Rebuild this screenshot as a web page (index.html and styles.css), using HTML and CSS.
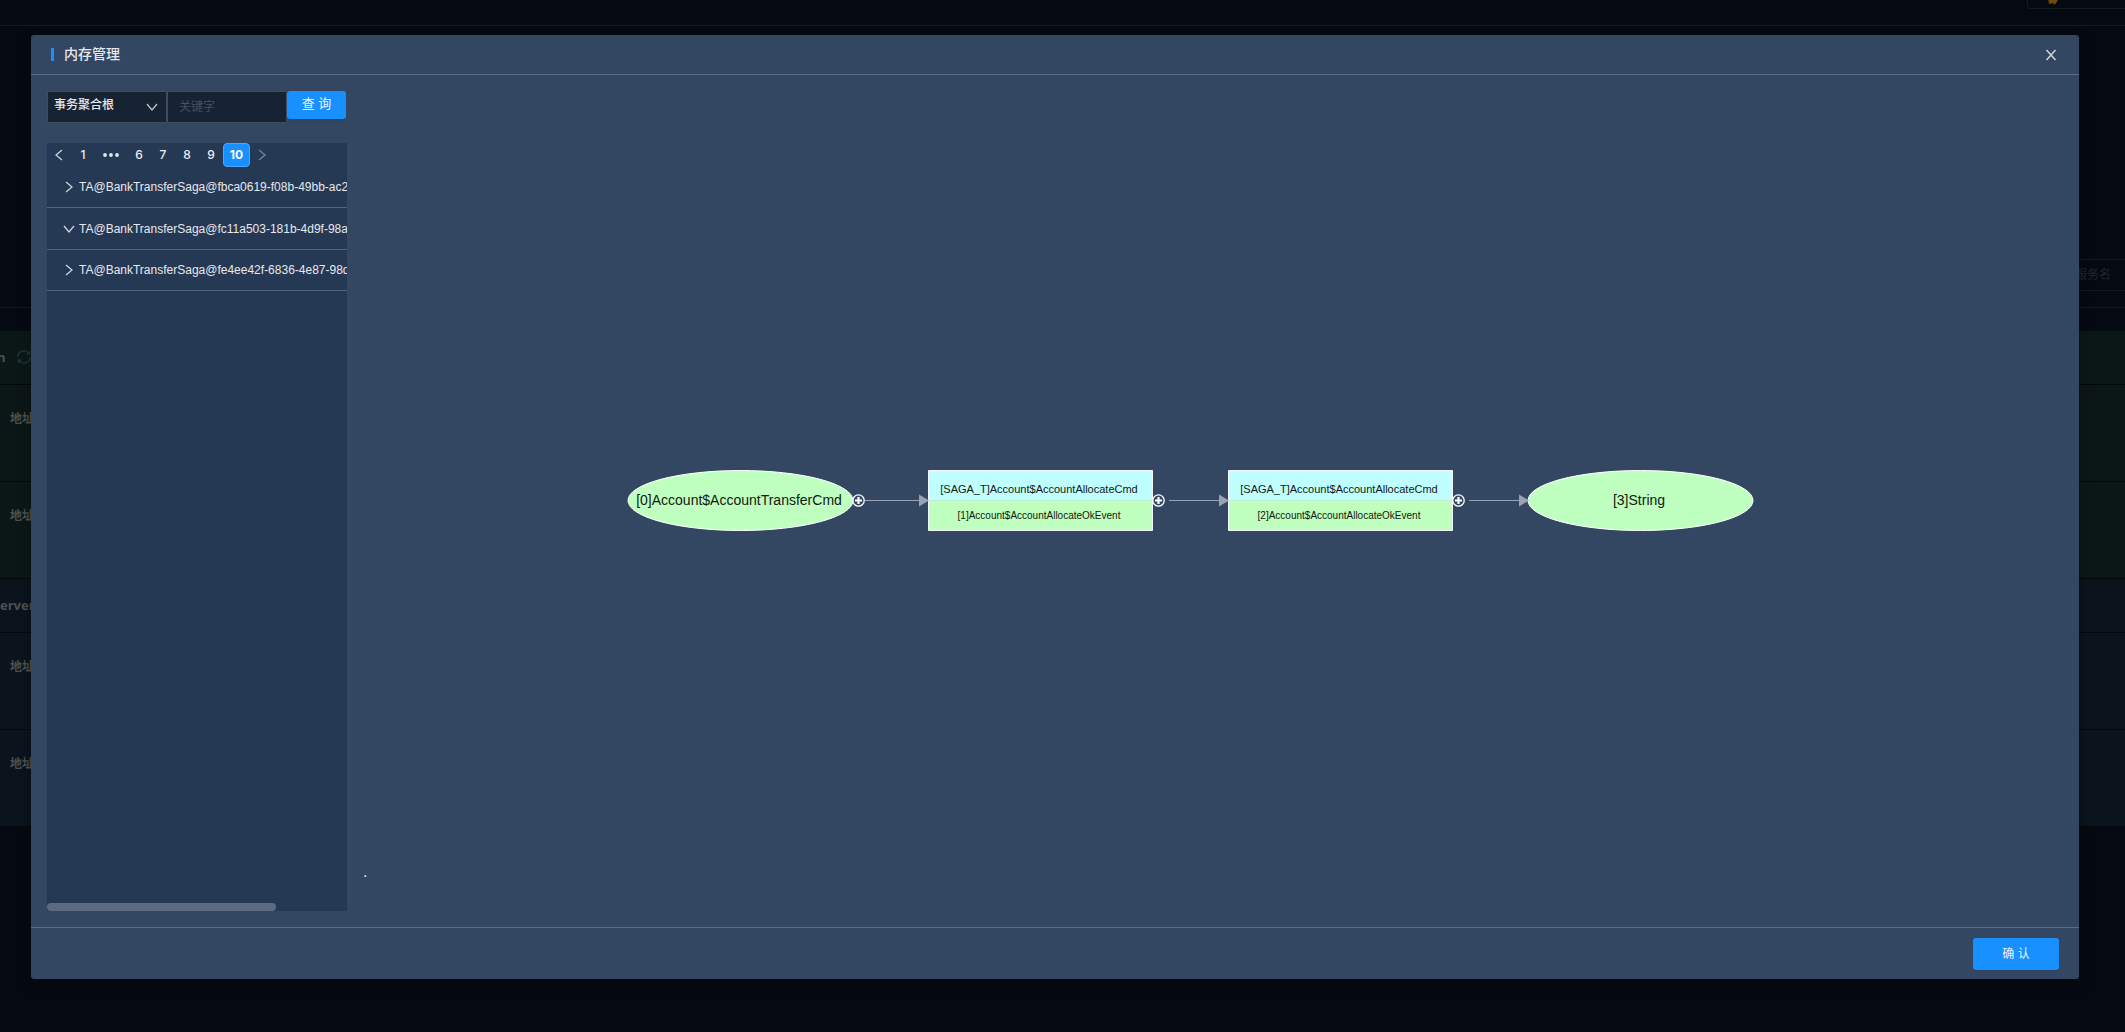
FILE: index.html
```
<!DOCTYPE html>
<html lang="zh-CN">
<head>
<meta charset="utf-8">
<title>内存管理</title>
<link rel="stylesheet" href="styles.css">
</head>
<body>
<div class="page">
  <header class="topbar">
    <div class="notice"><svg width="14" height="14" viewBox="0 0 14 14"><path d="M2 6l3-3 4-1 3 5-1 3-1 1-2 2-1-2-4 1z" fill="#6b4a0c"/></svg></div>
  </header>
  <div class="filters"><div class="service-name">服务名</div></div>
  <main class="services">
    <section class="group group-green">
      <div class="group-head">n
        <svg class="sync" width="16" height="16" viewBox="0 0 16 16" fill="none" stroke="#1c3545" stroke-width="1.3"><path d="M2 8a6 6 0 0 1 11-3.400M14 8a6 6 0 0 1-11 3.400"/><path d="M13.500 2v3h-3M2.500 14v-3h3"/></svg>
      </div>
      <div class="address">地址</div>
      <div class="address">地址</div>
    </section>
    <section class="group group-blue">
      <div class="group-head">erver</div>
      <div class="address">地址</div>
      <div class="address">地址</div>
    </section>
  </main>
</div>

<div class="modal" role="dialog" aria-labelledby="modal-title">
  <div class="modal-head">
    <h1 class="modal-title" id="modal-title">内存管理</h1>
    <button class="close" type="button" aria-label="关闭"><svg width="12" height="12" viewBox="0 0 12 12" fill="none" stroke="#d6dae0" stroke-width="1.4"><path d="M1.500 1l9 10M10.500 1l-9 10"/></svg></button>
  </div>
  <div class="modal-body">
    <aside class="side">
      <form class="search">
        <div class="select-wrap">
          <select class="kind" aria-label="类型"><option>事务聚合根</option></select>
          <svg class="select-arrow" width="12" height="12" viewBox="0 0 12 12" fill="none" stroke="#c3c8ce" stroke-width="1.2"><path d="M1 3l5 6 5-6"/></svg>
        </div>
        <input class="keyword" type="text" placeholder="关键字" aria-label="关键字">
        <button class="primary query" type="button">查 询</button>
      </form>
      <div class="list">
        <nav class="pager" aria-label="分页">
          <button class="page-step" type="button" aria-label="上一页"><svg width="10" height="12" viewBox="0 0 10 12" fill="none" stroke="#d4d7dd" stroke-width="1.2"><path d="M8 1L2 6l6 5"/></svg></button>
          <button class="page-no" type="button">1</button>
          <button class="page-gap" type="button" aria-label="更多"><svg width="18" height="4" viewBox="0 0 18 4" fill="#e3e6ea"><circle cx="3" cy="2" r="1.900"/><circle cx="9" cy="2" r="1.900"/><circle cx="15" cy="2" r="1.900"/></svg></button>
          <button class="page-no" type="button">6</button>
          <button class="page-no" type="button">7</button>
          <button class="page-no" type="button">8</button>
          <button class="page-no" type="button">9</button>
          <button class="page-no current" type="button" aria-current="page">10</button>
          <button class="page-step" type="button" aria-label="下一页" disabled><svg width="10" height="12" viewBox="0 0 10 12" fill="none" stroke="#7d8898" stroke-width="1.200"><path d="M2 1l6 5-6 5"/></svg></button>
        </nav>
        <ul class="rows">
          <li class="row"><svg class="caret" width="12" height="12" viewBox="0 0 12 12" fill="none" stroke="#d4d7dd" stroke-width="1.200"><path d="M3 1l6 5-6 5"/></svg>TA@BankTransferSaga@fbca0619-f08b-49bb-ac2e</li>
          <li class="row"><svg class="caret" width="12" height="12" viewBox="0 0 12 12" fill="none" stroke="#d4d7dd" stroke-width="1.200"><path d="M1 3l5 6 5-6"/></svg>TA@BankTransferSaga@fc11a503-181b-4d9f-98a3</li>
          <li class="row"><svg class="caret" width="12" height="12" viewBox="0 0 12 12" fill="none" stroke="#d4d7dd" stroke-width="1.200"><path d="M3 1l6 5-6 5"/></svg>TA@BankTransferSaga@fe4ee42f-6836-4e87-98dc</li>
        </ul>
        <div class="scroll-thumb"></div>
      </div>
    </aside>
    <div class="stage">
      <svg class="graph" role="img" aria-label="事务流程">
        <defs>
          <g id="plus"><circle r="5.700" fill="none" stroke="#fff" stroke-width="1.300"/><path d="M-3.500 0h7M0-3.500v7" stroke="#fff" stroke-width="2.200"/></g>
          <g id="arrow"><path d="M0 0l-10-6v12z" fill="#9aa3b3"/></g>
        </defs>
        <path class="edge" d="M502 409.500h54M806 409.500h50M1106 409.500h50"/>
        <ellipse class="green" cx="377.500" cy="409.500" rx="112.500" ry="30"/>
        <text class="label" x="376" y="414">[0]Account$AccountTransferCmd</text>
        <rect class="cyan" x="565.500" y="379.500" width="224" height="30"/>
        <rect class="green" x="565.500" y="409.500" width="224" height="30"/>
        <path class="frame" d="M565.500 439.500v-60h224v60z"/>
        <path class="split" d="M566 409.500h223"/>
        <text class="label cmd" x="676" y="402">[SAGA_T]Account$AccountAllocateCmd</text>
        <text class="label event" x="676" y="428">[1]Account$AccountAllocateOkEvent</text>
        <rect class="cyan" x="865.500" y="379.500" width="224" height="30"/>
        <rect class="green" x="865.500" y="409.500" width="224" height="30"/>
        <path class="frame" d="M865.500 439.500v-60h224v60z"/>
        <path class="split" d="M866 409.500h223"/>
        <text class="label cmd" x="976" y="402">[SAGA_T]Account$AccountAllocateCmd</text>
        <text class="label event" x="976" y="428">[2]Account$AccountAllocateOkEvent</text>
        <ellipse class="green" cx="1277.500" cy="409.500" rx="112.500" ry="30"/>
        <text class="label" x="1276" y="414">[3]String</text>
        <use href="#arrow" x="566" y="409.500"/><use href="#arrow" x="866" y="409.500"/><use href="#arrow" x="1166" y="409.500"/>
        <use href="#plus" x="495.500" y="409.500"/><use href="#plus" x="795.500" y="409.500"/><use href="#plus" x="1095.500" y="409.500"/>
      </svg>
      <p class="caption">.</p>
    </div>
  </div>
  <div class="modal-foot"><button class="primary confirm" type="button">确 认</button></div>
</div>
</body>
</html>
```
FILE: styles.css
```
* { box-sizing: border-box; }
html, body { height: 100%; }
body {
  margin: 0;
  position: relative;
  overflow: hidden;
  background: #050a12;
  color: #e6e8ec;
  font: 12px/18px "Liberation Sans", "Noto Sans CJK SC", sans-serif;
}
button, input, select { font: inherit; color: inherit; margin: 0; }
button { border: 0; padding: 0; background: none; cursor: pointer; }
svg { display: block; flex: none; }

/* dimmed page behind the dialog */
.page { min-height: 100%; color: #4c5150; }
.topbar { height: 26px; border-bottom: 1px solid #141a1f; display: flex; justify-content: flex-end; }
.notice {
  width: 98px; height: 9px; padding-left: 18px;
  display: flex; align-items: flex-end; overflow: hidden;
  border: 1px solid #171c22; border-top: 0; border-right: 0; border-radius: 0 0 0 4px;
}
.notice svg { margin-bottom: 2px; }
.filters {
  height: 282px; padding-bottom: 16px;
  display: flex; align-items: flex-end; justify-content: flex-end;
  border-bottom: 1px solid #15191c;
}
.service-name {
  width: 160px; height: 32px; padding-right: 14px;
  border: 1px solid #15191c; border-right: 0;
  line-height: 30px; text-align: right; color: #20262c;
}
.services { padding-top: 23px; }
.group-green { background: #0b1716; }
.group-blue { background: #0b131d; }
.group-head {
  height: 54px; padding-bottom: 2px; display: flex; align-items: center; gap: 10px;
  border-bottom: 1px solid #04080b;
  font-size: 13px; font-weight: bold; font-family: "Open Sans", sans-serif;
}
.group-green .group-head { text-indent: -3px; }
.address {
  height: 97px; padding: 25px 0 0 10px;
  border-bottom: 1px solid #04080b;
  font-weight: bold;
}

/* dialog */
.modal {
  position: absolute; top: 35px; right: 46px; bottom: 53px; left: 31px;
  display: flex; flex-direction: column;
  background: #334763; border-radius: 3px;
  box-shadow: 0 4px 12px rgba(0, 0, 0, .3);
}
.modal-head {
  height: 40px; padding: 0 22px 0 20px; flex: none;
  display: flex; align-items: center; justify-content: space-between;
  border-bottom: 1px solid #5b6d80;
}
.modal-title {
  margin: 0; padding-left: 10px;
  display: flex; align-items: center;
  border-left: 3px solid #1890ff;
  font-size: 14px; line-height: 13px; font-weight: 500;
}
.modal-body { flex: 1; min-height: 0; padding: 16px; display: flex; gap: 16px; }
.side { width: 300px; flex: none; display: flex; flex-direction: column; gap: 20px; }
.search { display: flex; align-items: flex-start; height: 32px; }
.select-wrap { position: relative; width: 120px; }
.kind, .keyword {
  width: 120px; height: 32px;
  background: #162333; border: 1px solid #434c5a; border-radius: 1px;
}
.kind { appearance: none; padding: 0 24px 4px 6px; font-weight: 500; }
.select-arrow { position: absolute; right: 9px; top: 10px; pointer-events: none; }
.keyword { padding: 0 11px; }
.keyword::placeholder { color: #46515f; opacity: 1; }
.primary {
  background: #1890ff; color: #e9f3fd; border-radius: 3px;
  box-shadow: 0 2px 0 rgba(0, 0, 0, .04);
}
.query { width: 59px; height: 28px; padding-bottom: 2px; font-size: 13px; }
.list {
  flex: 1; min-height: 0; overflow: hidden;
  display: flex; flex-direction: column;
  background: #263954;
}
.pager { height: 24px; flex: none; display: flex; align-items: center; color: #eceef1; font-weight: 500; }
.page-step, .page-no { width: 24px; height: 24px; display: grid; place-items: center; }
.page-gap { width: 32px; height: 24px; display: grid; place-items: center; }
.page-no { font-family: Inter, sans-serif; }
.current {
  width: 27px; font-weight: bold; color: #fff;
  background: #1890ff; border: 1px solid #4aa5fb; border-radius: 4px;
}
.rows { flex: 1; margin: 0; padding: 0; list-style: none; }
.row {
  height: 41px; padding-left: 16px;
  display: flex; align-items: center; gap: 4px;
  border-bottom: 1px solid #566479;
  white-space: nowrap;
}
.row + .row { height: 42px; }
.row + .row + .row { height: 41px; }
.scroll-thumb { width: 229px; height: 8px; border-radius: 4px; background: #5d6b80; }

.stage { flex: 1; min-width: 0; display: flex; flex-direction: column; }
.graph { flex: 1; width: 100%; min-height: 0; }
.edge { stroke: #9aa3b3; fill: none; }
.green { fill: #bfffbf; }
.cyan { fill: #bfffff; }
ellipse.green { stroke: #fff; }
.frame { fill: none; stroke: #f4f6fa; }
.split { stroke: #c3eecf; }
.label { fill: #111a11; font-size: 14px; text-anchor: middle; }
.cmd { font-size: 11px; }
.event { font-size: 10px; }
.caption { margin: 0 0 30px; font-size: 16px; line-height: 18px; flex: none; }

.modal-foot {
  height: 52px; padding: 0 20px; flex: none;
  display: flex; align-items: center; justify-content: flex-end;
  border-top: 1px solid #5b6d80;
}
.confirm { width: 86px; height: 32px; }
```
